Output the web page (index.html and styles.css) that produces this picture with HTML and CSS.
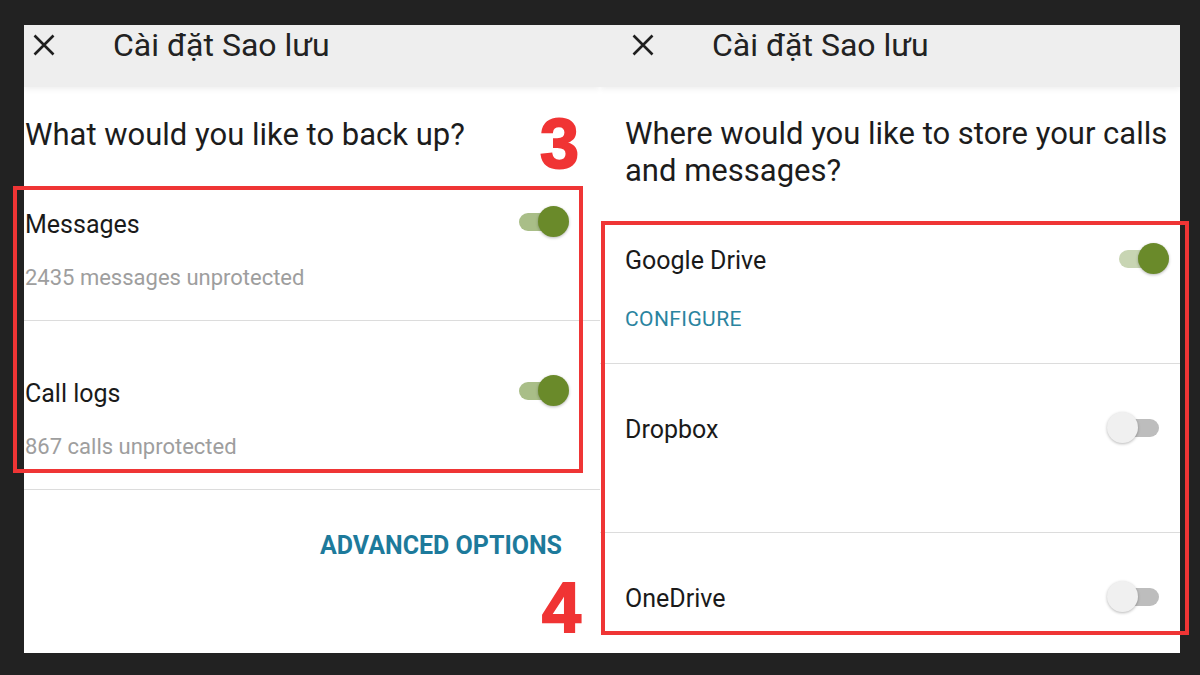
FILE: index.html
```html
<!DOCTYPE html>
<html lang="vi">
<head>
    <meta charset="UTF-8">
    <title>Cài đặt Sao lưu</title>
    <link rel="stylesheet" href="styles.css">
</head>
<body>
    <div class="stage">
        <div class="screen screen-left">
            <div class="appbar">
                <svg class="close" viewBox="0 0 22 22" width="22" height="22">
                    <path d="M1.5 1.5L20.5 20.5M20.5 1.5L1.5 20.5" stroke="#1f1f1f" stroke-width="2.6" fill="none"/>
                </svg>
                <span class="appbar-title">Cài đặt Sao lưu</span>
            </div>
            <h2 class="question">What would you like to back up?</h2>
            <div class="row">
                <div class="row-main">
                    <span class="row-title">Messages</span>
                    <span class="switch on"><span class="track"></span><span class="thumb"></span></span>
                </div>
                <div class="row-sub">2435 messages unprotected</div>
            </div>
            <div class="row">
                <div class="row-main">
                    <span class="row-title">Call logs</span>
                    <span class="switch on"><span class="track"></span><span class="thumb"></span></span>
                </div>
                <div class="row-sub">867 calls unprotected</div>
            </div>
            <div class="advanced">ADVANCED OPTIONS</div>
        </div>

        <div class="screen screen-right">
            <div class="appbar">
                <svg class="close" viewBox="0 0 22 22" width="22" height="22">
                    <path d="M1.5 1.5L20.5 20.5M20.5 1.5L1.5 20.5" stroke="#1f1f1f" stroke-width="2.6" fill="none"/>
                </svg>
                <span class="appbar-title">Cài đặt Sao lưu</span>
            </div>
            <h2 class="question">Where would you like to store your calls<br>and messages?</h2>
            <div class="row">
                <div class="row-main">
                    <span class="row-title">Google Drive</span>
                    <span class="switch on"><span class="track"></span><span class="thumb"></span></span>
                </div>
                <div class="row-sub row-link">CONFIGURE</div>
            </div>
            <div class="row">
                <div class="row-main">
                    <span class="row-title">Dropbox</span>
                    <span class="switch"><span class="track"></span><span class="thumb"></span></span>
                </div>
            </div>
            <div class="row">
                <div class="row-main">
                    <span class="row-title">OneDrive</span>
                    <span class="switch"><span class="track"></span><span class="thumb"></span></span>
                </div>
            </div>
        </div>

        <!-- red annotations drawn over the screenshots -->
        <div class="mark-box mark-box-3"></div>
        <div class="mark-box mark-box-4"></div>
        <div class="mark-num mark-num-3">3</div>
        <div class="mark-num mark-num-4">4</div>
    </div>
</body>
</html>
```

FILE: styles.css
```css
body {
    margin: 0;
    padding: 0;
    background-color: #222222;
    font-family: Roboto, "Noto Sans", Arial, sans-serif;
}

.stage {
    position: relative;
    width: 1200px;
    height: 675px;
    box-sizing: border-box;
    padding: 25px 0 0 24px;
    display: flex;
    align-items: flex-start;
    overflow: hidden;
}

.screen {
    height: 628px;
    background-color: #fff;
    overflow: hidden;
    display: flex;
    flex-direction: column;
}

.screen-left {
    width: 576px;
}

.screen-right {
    width: 580px;
}

.appbar {
    flex-shrink: 0;
    height: 62px;
    box-sizing: border-box;
    padding-bottom: 22px;
    display: flex;
    align-items: center;
    background-color: #eeeeee;
    box-shadow: 0 2px 6px rgba(0, 0, 0, 0.07);
    position: relative;
    z-index: 1;
}

.screen-left .appbar {
    padding-left: 9px;
}

.screen-right .appbar {
    padding-left: 32px;
}

.close {
    flex-shrink: 0;
    margin-right: 58px;
}

.appbar-title {
    font-size: 32px;
    line-height: 40px;
    color: #222;
}

.question {
    flex-shrink: 0;
    margin: 0;
    box-sizing: border-box;
    font-size: 31px;
    font-weight: 400;
    color: #1c1c1c;
}

.screen-left .question {
    height: 65px;
    padding: 29px 0 0 1px;
    line-height: 37px;
}

.screen-right .question {
    height: 108px;
    padding: 28px 0 0 25px;
    line-height: 37px;
}

.row {
    flex-shrink: 0;
    height: 169px;
    box-sizing: border-box;
    border-bottom: 1px solid #dcdcdc;
}

.screen-left .row {
    padding: 58px 31px 0 1px;
}

.screen-right .row {
    padding: 51px 11px 0 25px;
}

.row-main {
    height: 30px;
    display: flex;
    align-items: center;
    justify-content: space-between;
}

.screen-left .row-main .switch {
    margin-top: -8px;
}

.screen-right .row-main .switch {
    margin-top: -5px;
}

.row-title {
    font-size: 25px;
    line-height: 30px;
    color: #1a1a1a;
}

.row-sub {
    margin-top: 24px;
    font-size: 22px;
    line-height: 28px;
    color: #9e9e9e;
}

.screen-right .row-sub {
    margin-top: 29px;
}

.row-link {
    color: #2a84a0;
    font-size: 21px;
    letter-spacing: 0.4px;
}

.advanced {
    margin-top: 41px;
    padding-right: 38px;
    text-align: right;
    font-size: 25px;
    line-height: 30px;
    font-weight: 700;
    color: #1d7a9b;
}

.switch {
    position: relative;
    flex-shrink: 0;
    width: 62px;
    height: 31px;
}

.track {
    position: absolute;
    left: 12px;
    right: 10px;
    top: 7px;
    height: 18px;
    border-radius: 9px;
    background-color: #bdbdbd;
}

.thumb {
    position: absolute;
    top: 0;
    left: 0;
    width: 31px;
    height: 31px;
    border-radius: 50%;
    background-color: #f0f0f0;
    box-shadow: 0 1px 3px rgba(0, 0, 0, 0.28);
}

.switch.on .track {
    background-color: #a9be88;
}

.screen-right .switch.on .track {
    background-color: #c8d5b3;
}

.switch.on .thumb {
    left: auto;
    right: 0;
    background-color: #6a8a2a;
}

.mark-box {
    position: absolute;
    box-sizing: border-box;
    border: 4px solid #ef3535;
}

.mark-box-3 {
    left: 13px;
    top: 186px;
    width: 570px;
    height: 287px;
}

.mark-box-4 {
    left: 601px;
    top: 221px;
    width: 588px;
    height: 414px;
}

.mark-num {
    position: absolute;
    font-family: "Liberation Sans", Arial, sans-serif;
    font-weight: 700;
    font-size: 70px;
    line-height: 70px;
    color: #f03434;
    -webkit-text-stroke: 2px #f03434;
}

.mark-num-3 {
    left: 540px;
    top: 109px;
}

.mark-num-4 {
    left: 542px;
    top: 573px;
}
```
